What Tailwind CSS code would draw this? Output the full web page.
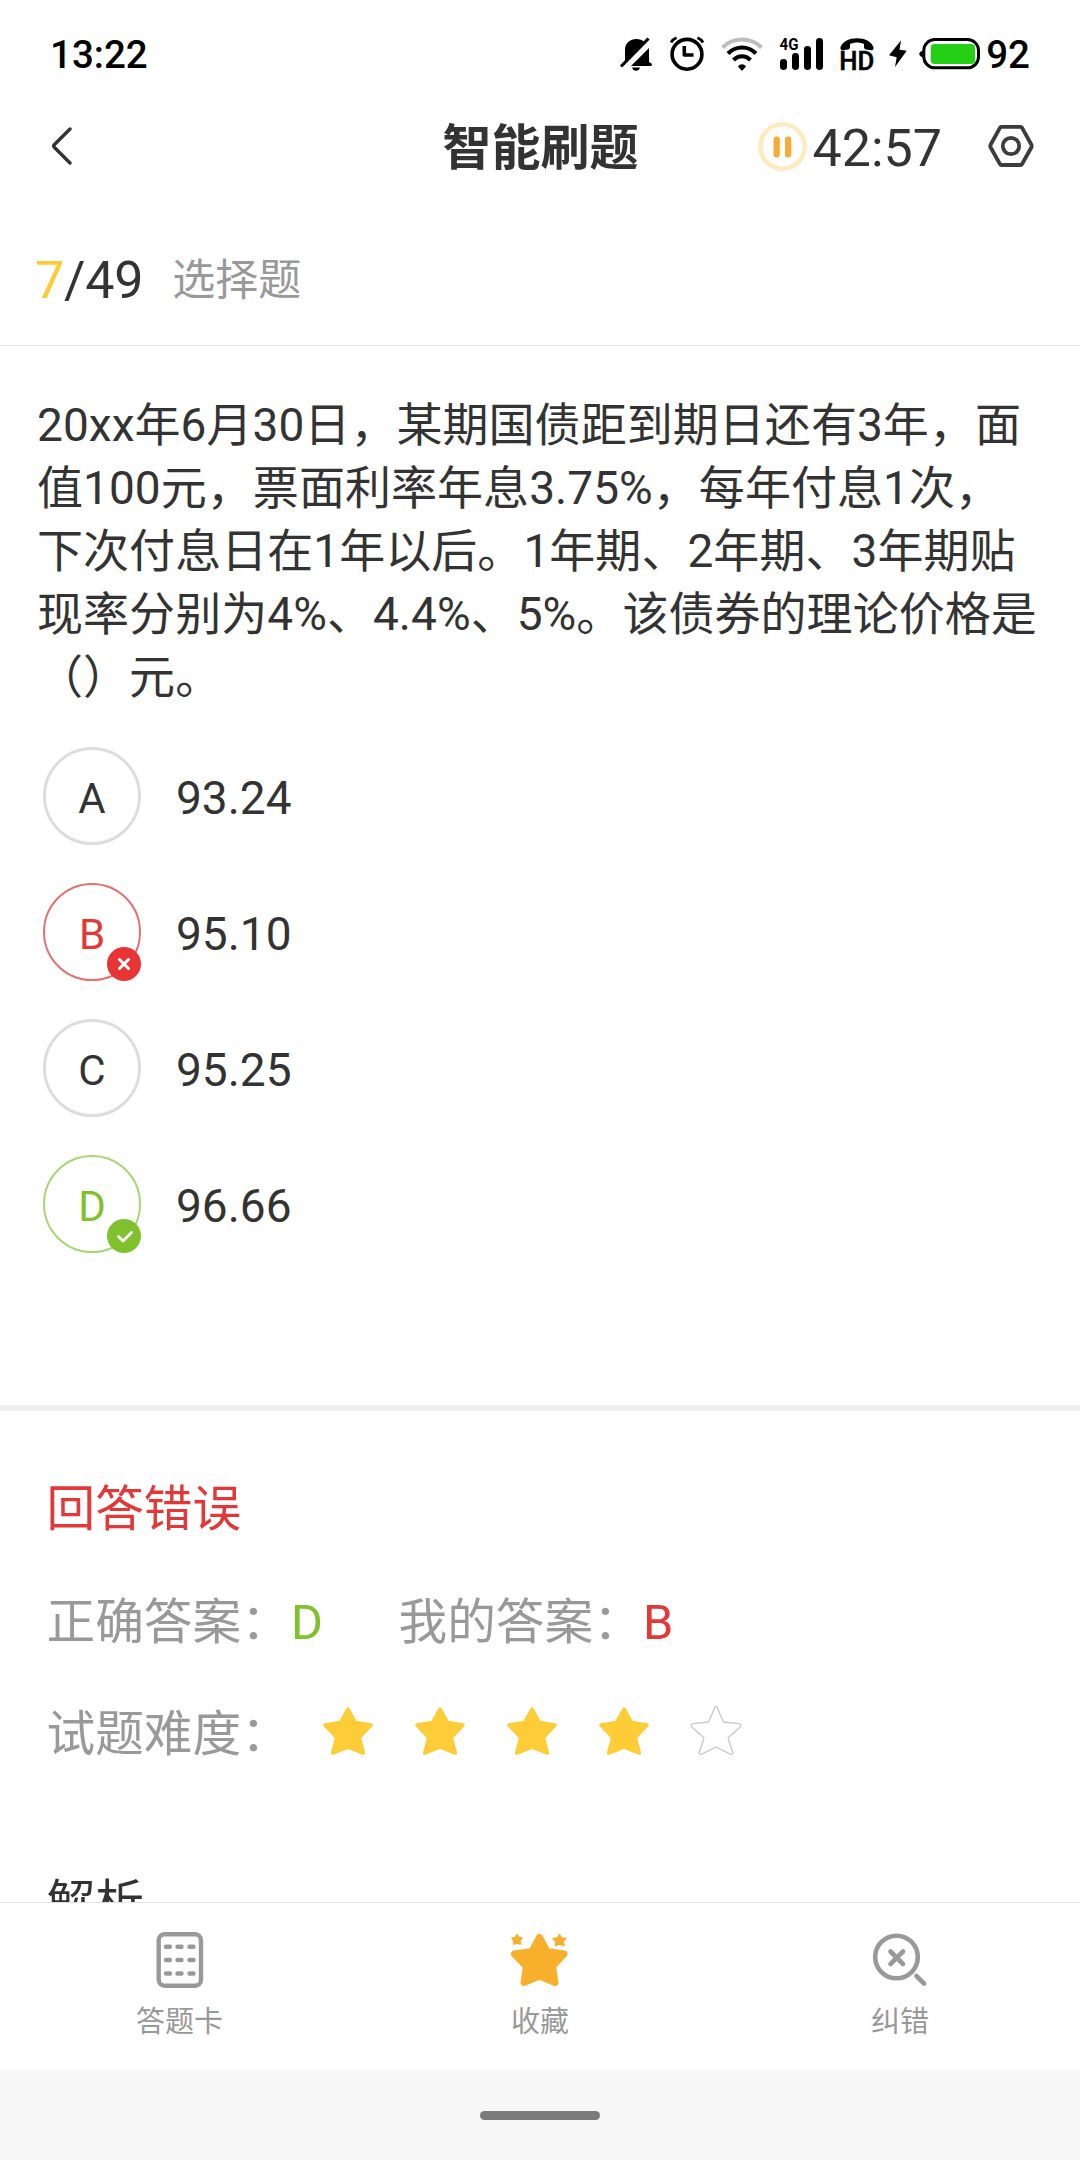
<!DOCTYPE html>
<html lang="zh-CN">
<head>
    <meta charset="UTF-8">
    <meta name="viewport" content="width=device-width, initial-scale=1.0">
    <title>智能刷题</title>
    <script src="https://cdn.jsdelivr.net/npm/@tailwindcss/browser@4"></script>
</head>
<body class="bg-white">
<div class="w-[1080px] h-[2160px] flex flex-col overflow-hidden bg-white text-[#333] font-[Roboto,'Noto_Sans_CJK_SC',sans-serif] whitespace-nowrap">

    <!-- status bar -->
    <div class="h-[108px] shrink-0 flex items-center pl-[50px] text-black">
        <span class="pt-0.5 text-[38.5px] font-medium">13:22</span>
        <div class="absolute left-[619px] top-9 flex h-9">
            <!-- muted -->
            <svg class="w-[34px] h-9" viewBox="0 0 34 36">
                <path d="M6 27V14C6 7 11 3 17.500 3c3 0 5.500 1 7.500 2.500L6 25zM30 12v14l2.500 1.500c1 1 .3 2.500-1 2.500H12z"/>
                <path d="M13 31.500h8c-.5 2-2 3.300-4 3.300s-3.500-1.300-4-3.300z"/>
                <path d="M2 30.500 29.500 2.500" stroke="#000" stroke-width="3.200"/>
            </svg>
            <!-- alarm -->
            <svg class="w-9 h-9 ml-4" viewBox="0 0 36 36" fill="none" stroke="#000" stroke-width="3.600">
                <circle cx="18" cy="18.300" r="14.900"/>
                <path d="M15.300 10v9H24.500" stroke-linejoin="round"/>
                <path d="M2 6.500C3 4.500 5 2.700 7.500 1.700M34 6.500c-1-2-3-3.800-5.500-4.800" stroke-width="2.800"/>
            </svg>
            <!-- wifi -->
            <svg class="w-11 h-9 ml-[15px]" viewBox="0 0 44 36" fill="none" stroke="#000" stroke-width="4">
                <path d="M2.500 11.500C13 .8 31 .8 41.500 11.500" stroke="#bdbdbd"/>
                <path d="M8 17.500c8-8 20-8 28 0M13.500 24c5-5 12-5 17 0"/>
                <path d="M18 30.500c2-3 6-3 8 0l-4 4.500z" fill="#000" stroke="none"/>
            </svg>
            <!-- signal -->
            <svg class="w-[45px] h-9 ml-[15px] overflow-visible" viewBox="0 0 45 36">
                <text x="0.500" y="14" font-size="16" font-weight="700" textLength="19" lengthAdjust="spacingAndGlyphs">4G</text>
                <rect x="1" y="23" width="7" height="11" rx="3.400"/>
                <rect x="13" y="17" width="7" height="17" rx="3.400"/>
                <rect x="25" y="10" width="7" height="24" rx="3.400"/>
                <rect x="37" y="2" width="7" height="32" rx="3.400"/>
            </svg>
            <!-- HD call -->
            <svg class="w-[37px] h-9 ml-[15px] overflow-visible" viewBox="0 0 37 36">
                <path d="M1.500 11C4 5 10 2.200 18 2.200S32 5 34.500 11c.4 2-.5 3.500-2 3.300l-5.500-.7c-1.500-.3-2-1.300-2-3V8C20 6 16 6 11 8v2.600c0 1.700-.5 2.700-2 3l-5.500.7c-1.500.2-2.400-1.300-2-3.300z"/>
                <text x="0.300" y="33.800" font-size="25" font-weight="500" stroke="#000" stroke-width="0.500" textLength="35" lengthAdjust="spacingAndGlyphs">HD</text>
            </svg>
            <!-- charging -->
            <svg class="w-5 h-9 ml-3" viewBox="0 0 20 36">
                <path d="M13 4.500 1 19.300l7.700 2L7 31 18.700 14.700l-7.200-1z"/>
            </svg>
            <!-- battery -->
            <svg class="w-[62px] h-9 ml-[11px]" viewBox="0 0 62 36">
                <path d="M4 14.500c-5 1.500-5 5.500 0 7z"/>
                <rect x="4.800" y="3.500" width="54.700" height="28.300" rx="11" fill="none" stroke="#000" stroke-width="3"/>
                <rect x="11.700" y="8" width="44.300" height="20" rx="4" fill="#24d016"/>
            </svg>
        </div>
        <span class="ml-auto mr-[50px] pt-px text-[38.5px] font-medium">92</span>
    </div>

    <!-- header -->
    <div class="h-20 shrink-0 grid grid-cols-[1fr_auto_1fr] items-center">
        <svg class="w-[22px] h-10 ml-[51px] mb-1" viewBox="0 0 22 40" fill="none" stroke="#333" stroke-width="3.400" stroke-linecap="round" stroke-linejoin="round">
            <path d="M19 3 3.500 18.500q-1.500 1.500 0 3L19 37"/>
        </svg>
        <h1 class="pt-px pl-px text-[49px] leading-[76px] font-bold">智能刷题</h1>
        <div class="flex items-center justify-end pr-[45px]">
            <svg class="w-[49px] h-[49px] mb-1" viewBox="0 0 49 49">
                <circle cx="24.500" cy="24.500" r="22.200" fill="none" stroke="#feecc0" stroke-width="4.600"/>
                <rect x="15.500" y="14.500" width="6.300" height="21" rx="3" fill="#f8ac33"/>
                <rect x="27" y="14.500" width="6.300" height="21" rx="3" fill="#f8ac33"/>
            </svg>
            <span class="ml-1.5 pt-0.5 text-[52px] leading-[76px]">42:57</span>
            <svg class="w-12 h-11 ml-[45px] mb-1" viewBox="0 0 48 44" fill="none" stroke="#3c3c3c" stroke-width="3.800" stroke-linejoin="round">
                <path d="M14.500 2.800h19q1 0 1.600 1L44.300 20.500q.8 1.500 0 3L35.100 40q-.6 1-1.600 1h-19q-1 0-1.600-1L3.700 23.500q-.8-1.500 0-3L12.900 3.800q.6-1 1.600-1z"/>
                <circle cx="24" cy="22" r="8.200"/>
            </svg>
        </div>
    </div>

    <!-- progress -->
    <div class="mt-[27px] h-[131px] shrink-0 flex items-center pt-px pl-[35px] border-b border-[#e0e0e0]">
        <span class="text-[52px] tracking-[-0.2px]"><span class="text-[#fdcb37]">7</span>/49</span>
        <span class="ml-[29px] text-[43px] text-[#999]">选择题</span>
    </div>

    <!-- question -->
    <div class="h-[1059px] shrink-0 pt-12 pl-[37px]">
        <p class="text-[46px] leading-[63px] tracking-[0.05px]">20xx年6月30日，某期国债距到期日还有3年，面<br>值100元，票面利率年息3.75%，每年付息1次，<br>下次付息日在1年以后。1年期、2年期、3年期贴<br>现率分别为4%、4.4%、5%。该债券的理论价格是<br>（）元。</p>

        <div class="mt-[38px] ml-1.5 flex flex-col gap-[38px]">
            <div class="flex items-center h-[98px]">
                <div class="w-[98px] h-[98px] rounded-full border-3 border-[#ddd] flex items-center justify-center text-[42px] pt-1">A</div>
                <span class="ml-[35px] pt-1 text-[46px]">93.24</span>
            </div>
            <div class="flex items-center h-[98px]">
                <div class="relative w-[98px] h-[98px] rounded-full border-2 border-[#e67070] flex items-center justify-center text-[42px] pt-1 text-[#e23838]">B
                    <svg class="absolute -right-0.5 -bottom-0.5 w-[34px] h-[34px]" viewBox="0 0 34 34">
                        <circle cx="17" cy="17" r="17" fill="#e83434"/>
                        <path d="M12.500 12.500l9 9M21.500 12.500l-9 9" stroke="#fff" stroke-width="3" stroke-linecap="round"/>
                    </svg>
                </div>
                <span class="ml-[35px] pt-1 text-[46px]">95.10</span>
            </div>
            <div class="flex items-center h-[98px]">
                <div class="w-[98px] h-[98px] rounded-full border-3 border-[#ddd] flex items-center justify-center text-[42px] pt-1">C</div>
                <span class="ml-[35px] pt-1 text-[46px]">95.25</span>
            </div>
            <div class="flex items-center h-[98px]">
                <div class="relative w-[98px] h-[98px] rounded-full border-2 border-[#a8d673] flex items-center justify-center text-[42px] pt-1 text-[#80c22e]">D
                    <svg class="absolute -right-0.5 -bottom-0.5 w-[34px] h-[34px]" viewBox="0 0 34 34">
                        <circle cx="17" cy="17" r="17" fill="#80c22e"/>
                        <path d="M11.500 17.500l4.500 4.500 8.500-8.500" fill="none" stroke="#fff" stroke-width="2.800" stroke-linecap="round" stroke-linejoin="round"/>
                    </svg>
                </div>
                <span class="ml-[35px] pt-1 text-[46px]">96.66</span>
            </div>
        </div>
    </div>

    <!-- result -->
    <div class="h-[497px] shrink-0 overflow-hidden border-t-6 border-[#eee] pt-[43px] pl-[46.5px] text-[48.7px] leading-[112.5px] text-[#999]">
        <div class="h-[112.5px] text-[#e23838]">回答错误</div>
        <div class="h-[112.5px] flex">
            <div class="w-[352px]">正确答案：<span class="ml-px text-[#80c22e]">D</span></div>
            <div>我的答案：<span class="ml-px text-[#e23838]">B</span></div>
        </div>
        <div class="h-[112.5px] flex items-center">
            <span class="w-[276px]">试题难度：</span>
            <div class="flex gap-[42px] -mt-2">
                <svg class="w-[50px] h-[50px]" viewBox="0 0 50 50"><path d="M25 3 32.500 16.500 48 19 36.300 31.500 40.300 47 25 41 9.700 47 13.700 31.500 2 19 17.500 16.500z" fill="#fdcc37" stroke="#fdcc37" stroke-width="3.500" stroke-linejoin="round"/></svg>
                <svg class="w-[50px] h-[50px]" viewBox="0 0 50 50"><path d="M25 3 32.500 16.500 48 19 36.300 31.500 40.300 47 25 41 9.700 47 13.700 31.500 2 19 17.500 16.500z" fill="#fdcc37" stroke="#fdcc37" stroke-width="3.500" stroke-linejoin="round"/></svg>
                <svg class="w-[50px] h-[50px]" viewBox="0 0 50 50"><path d="M25 3 32.500 16.500 48 19 36.300 31.500 40.300 47 25 41 9.700 47 13.700 31.500 2 19 17.500 16.500z" fill="#fdcc37" stroke="#fdcc37" stroke-width="3.500" stroke-linejoin="round"/></svg>
                <svg class="w-[50px] h-[50px]" viewBox="0 0 50 50"><path d="M25 3 32.500 16.500 48 19 36.300 31.500 40.300 47 25 41 9.700 47 13.700 31.500 2 19 17.500 16.500z" fill="#fdcc37" stroke="#fdcc37" stroke-width="3.500" stroke-linejoin="round"/></svg>
                <svg class="w-[50px] h-[50px] overflow-visible" viewBox="0 0 50 50"><path d="M23.800 1.300q1.200-2 2.400 0l2.500 6.200 3.800 8.500 15.500 1.700q3 .5 1.500 3L37 32l4.800 14.500q.3 2.300-2 1.800L25 41 10.200 48.300q-2.300.5-2-1.800l4.800-14.500L.5 20.700q-1.500-2.500 1.500-3L17.500 16l3.800-8.500z" fill="none" stroke="#c8c8c8" stroke-width="1.300" stroke-linejoin="round"/></svg>
            </div>
        </div>
        <div class="mt-[56px] h-[112px] text-[#333]">解析</div>
    </div>

    <!-- bottom bar -->
    <div class="h-[168px] shrink-0 grid grid-cols-3 border-t border-[#e0e0e0] text-[29px] leading-10 text-[#999]">
        <div class="flex flex-col items-center pt-[29px]">
            <svg class="w-12 h-14" viewBox="0 0 48 56" fill="none" stroke="#999" stroke-width="4.400">
                <rect x="2.700" y="2.200" width="42.300" height="51.600" rx="6"/>
                <path d="M10 14.700h4M21.500 14.700h4M33.500 14.700h4M10 28h4M21.500 28h4M33.500 28h4M10 41.500h4M21.500 41.500h4M33.500 41.500h4" stroke-linecap="round"/>
            </svg>
            <span class="mt-[14px] pr-px">答题卡</span>
        </div>
        <div class="flex flex-col items-center pt-[29px]">
            <svg class="w-[60px] h-14" viewBox="0 0 60 56" fill="#f8b02c" stroke="#f8b02c" stroke-linejoin="round">
                <path d="M29.500 5.500 37 19.500 54 22 42.500 34.500 45 50.500 29.500 44 14 50.500 16.500 34.500 4.500 22 22 19.500z" stroke-width="7"/>
                <path d="M7 2.500 9 5.500 12 6 10 9 10.500 12 7 11 3.500 12 4 9 2 6 5.500 5.500z" stroke-width="1.500"/>
                <path d="M49.500 2.500 51.500 6 56 6.500 53 9.500 54 13.500 49.500 12 45.500 13.500 46 9.500 43 6.500 47.500 6z" stroke-width="1.500"/>
            </svg>
            <span class="mt-[14px]">收藏</span>
        </div>
        <div class="flex flex-col items-center pt-[29px]">
            <svg class="w-[56px] h-14" viewBox="0 0 56 56" fill="none" stroke="#999" stroke-width="4.600" stroke-linecap="round">
                <circle cx="24.500" cy="25" r="21.300"/>
                <path d="M18.500 19.500 31 32M31 19.500 18.500 32M44.500 44l7.500 7.500"/>
            </svg>
            <span class="mt-[14px]">纠错</span>
        </div>
    </div>

    <!-- gesture bar -->
    <div class="grow bg-[#f7f7f7] flex justify-center pt-[41px]">
        <div class="w-[120px] h-[9px] rounded-full bg-[#7b7b7b]"></div>
    </div>
</div>
</body>
</html>
